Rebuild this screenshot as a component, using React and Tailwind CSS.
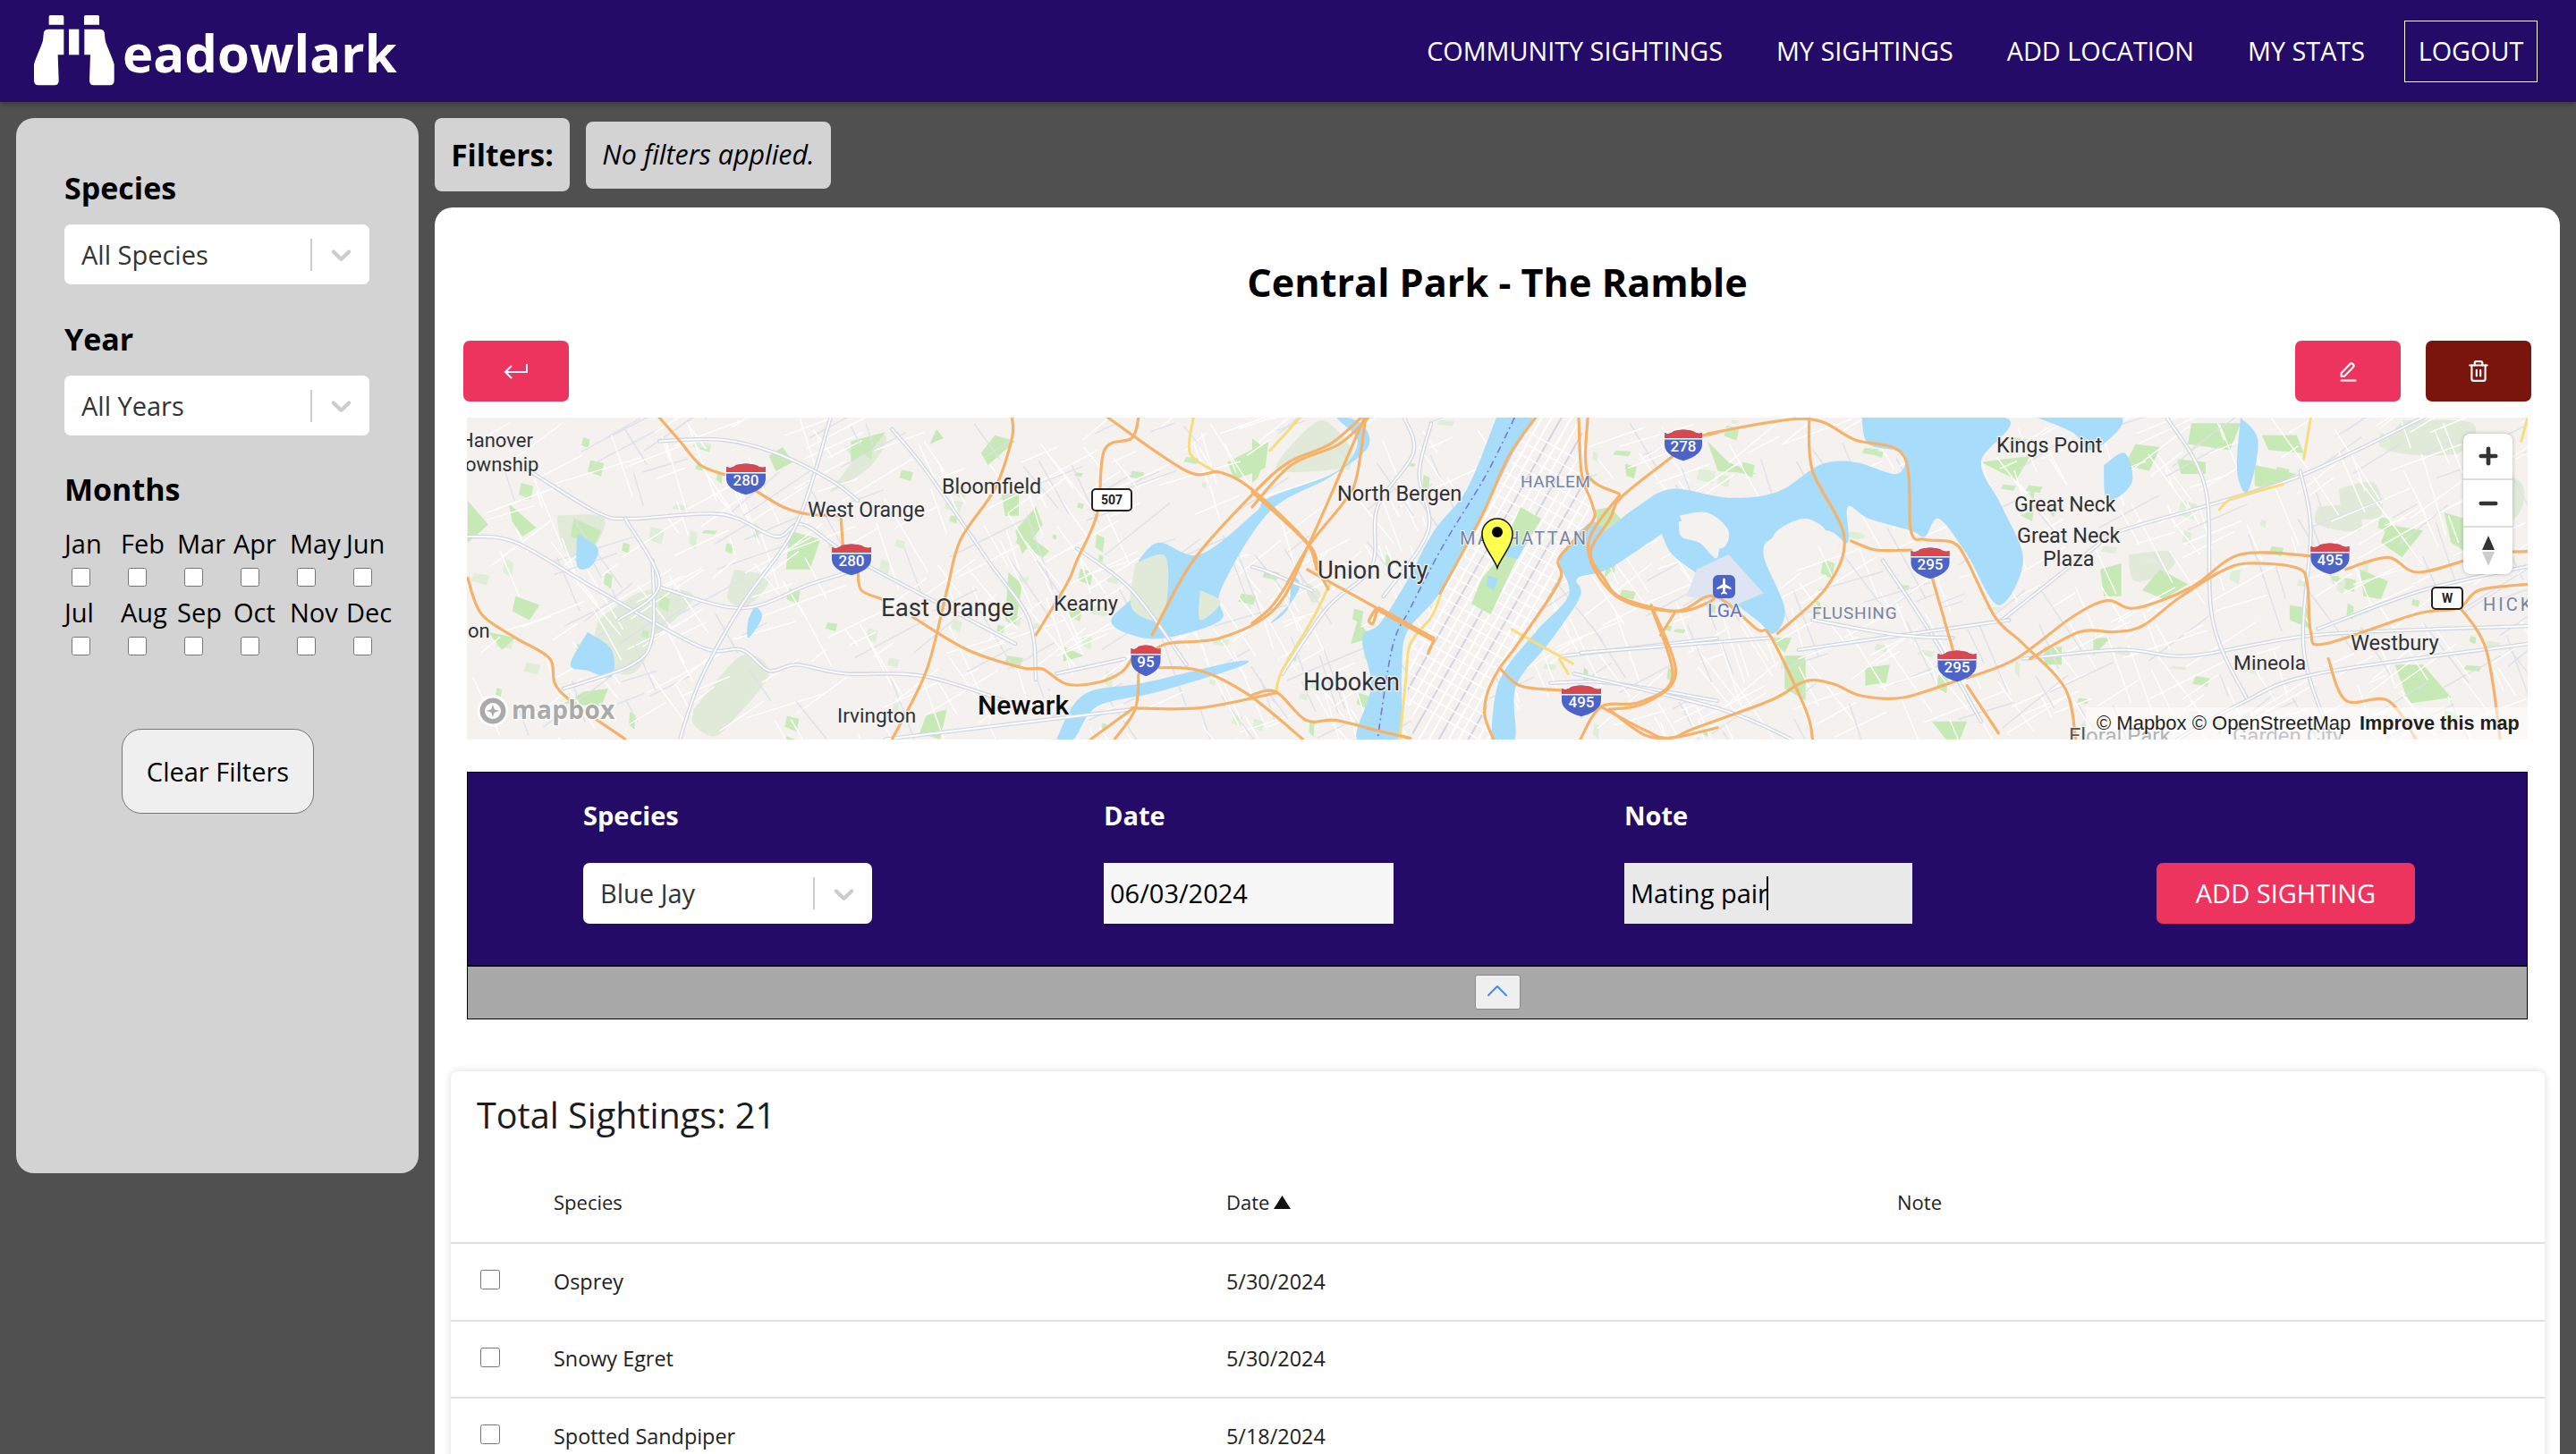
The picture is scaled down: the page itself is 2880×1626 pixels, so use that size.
import { ChevronUp, Minus, Plus, Trash2 } from "lucide-react";

const NAV_LINKS = ["COMMUNITY SIGHTINGS", "MY SIGHTINGS", "ADD LOCATION", "MY STATS"];
const MONTHS = ["Jan", "Feb", "Mar", "Apr", "May", "Jun", "Jul", "Aug", "Sep", "Oct", "Nov", "Dec"];
const SIGHTINGS = [
    { species: "Osprey", date: "5/30/2024" },
    { species: "Snowy Egret", date: "5/30/2024" },
    { species: "Spotted Sandpiper", date: "5/18/2024" },
];

// map traces were read off three crops, so each has its own conversion to map pixels
const z3 = (pts) => pts.map(([x, y]) => [x / 1.3067 - 22, y / 3 - 107]);
const z4 = (pts) => pts.map(([x, y]) => [1128 + x / 1.2748, y / 3 - 107]);
const z9 = (pts) => pts.map(([x, y]) => [878 + x / 3, y / 3]);

const poly = (pts) => pts.map(([x, y]) => `${x.toFixed(1)},${y.toFixed(1)}`).join(" ");

const smooth = (pts) => {
    let d = `M${pts[0][0].toFixed(1)} ${pts[0][1].toFixed(1)}`;
    for (let i = 0; i < pts.length - 1; i++) {
        const p0 = pts[i - 1] || pts[i];
        const p1 = pts[i];
        const p2 = pts[i + 1];
        const p3 = pts[i + 2] || p2;
        const c1x = p1[0] + (p2[0] - p0[0]) / 6;
        const c1y = p1[1] + (p2[1] - p0[1]) / 6;
        const c2x = p2[0] - (p3[0] - p1[0]) / 6;
        const c2y = p2[1] - (p3[1] - p1[1]) / 6;
        d += `C${c1x.toFixed(1)} ${c1y.toFixed(1)} ${c2x.toFixed(1)} ${c2y.toFixed(1)} ${p2[0].toFixed(1)} ${p2[1].toFixed(1)}`;
    }
    return d;
};

const WATER = [
    // hudson
    [[1151, 0], [1191, 0], [1168, 43], [1138, 103], [1108, 157], [1085, 200], [1051, 240], [1045, 283], [1041, 360], [995, 360], [1011, 300], [1001, 247], [1021, 230], [1051, 183], [1081, 127], [1118, 80]],
    // east river
    z9([[800, 1080], [830, 880], [950, 720], [1060, 600], [1040, 510], [1030, 470], [1140, 350], [1230, 430], [1290, 360], [1400, 260], [1560, 270], [1560, 330], [1440, 350], [1330, 420], [1190, 510], [1090, 540], [1100, 600], [1000, 750], [885, 900], [880, 1080]]),
    // the sound
    z4([[550, 321], [755, 321], [720, 470], [750, 620], [780, 800], [745, 950], [700, 780], [660, 660], [640, 720], [620, 700], [560, 660], [530, 620], [530, 740], [500, 700], [430, 720], [410, 780], [440, 960], [425, 1045], [400, 1000], [330, 870], [280, 780], [260, 700], [230, 720], [170, 830], [120, 830], [165, 740], [230, 620], [280, 560], [360, 590], [430, 570], [490, 480], [540, 470], [600, 510], [610, 440], [560, 410]]),
    z4([[800, 321], [920, 321], [880, 430], [850, 370]]),
    z4([[1090, 321], [1115, 400], [1100, 570], [1085, 500]]),
    z4([[895, 480], [925, 440], [935, 540], [900, 600]]),
    // hackensack and newark bay
    z3([[1010, 800], [1040, 740], [1100, 780], [1180, 640], [1200, 590], [1300, 500], [1330, 400], [1300, 321], [1335, 340], [1345, 420], [1290, 520], [1200, 640], [1130, 900], [1130, 1000], [1050, 1060], [1000, 1050], [970, 1000], [1010, 900]]),
    z3([[890, 1400], [930, 1250], [1020, 1210], [1150, 1140], [1160, 1155], [1040, 1240], [950, 1290], [915, 1400]]),
    z3([[190, 710], [220, 760], [210, 820], [190, 820]]),
    z3([[205, 1040], [240, 1100], [240, 1190], [205, 1170], [180, 1150]]),
    z3([[450, 950], [460, 990], [440, 1060], [440, 1000]]),
    z9([[130, 520], [160, 560], [130, 620], [60, 690], [120, 640]]),
];

// islands that sit on top of the water shapes
const ISLANDS = [
    { pts: z4([[290, 650], [330, 640], [360, 700], [350, 760], [310, 720]]), fill: "#f4f1ef" },
    { pts: z4([[415, 770], [430, 700], [470, 660], [500, 710], [470, 790], [430, 790]]), fill: "#f4f1ef" },
    { pts: z9([[1430, 350], [1510, 320], [1560, 350], [1560, 470], [1500, 420], [1440, 400]]), fill: "#f4f1ef" },
    { pts: z3([[1005, 810], [1050, 790], [1045, 990], [1000, 960]]), fill: "#e1ead9" },
    { pts: z3([[1100, 900], [1130, 940], [1100, 1000]]), fill: "#e1ead9" },
];

const GREEN = [
    z9([[900, 300], [970, 340], [880, 490], [800, 660], [735, 625], [770, 540], [820, 480], [860, 390]]),
    z9([[0, 70], [50, 110], [20, 200], [0, 220]]),
    z9([[1250, 155], [1290, 165], [1280, 205], [1255, 195]]),
    z9([[1150, 310], [1200, 300], [1255, 360], [1230, 390], [1160, 380]]),
    z9([[1190, 490], [1225, 490], [1180, 540]]),
    z3([[490, 420], [505, 470], [480, 500], [470, 450]]),
    z3([[590, 400], [640, 370], [620, 430], [590, 470]]),
    z3([[500, 700], [545, 730], [530, 830], [495, 830]]),
    z3([[185, 660], [225, 700], [215, 750], [180, 720]]),
    z3([[90, 610], [130, 690], [110, 720], [95, 670]]),
    z3([[100, 920], [135, 950], [120, 1000], [95, 970]]),
    z3([[30, 600], [60, 680], [30, 740]]),
    z3([[200, 1240], [235, 1230], [225, 1290], [170, 1280]]),
    z3([[800, 380], [830, 400], [790, 480], [780, 440]]),
    z3([[810, 580], [835, 570], [835, 650], [815, 650]]),
    z3([[860, 620], [870, 680], [840, 780], [830, 700]]),
    z3([[715, 360], [725, 390], [705, 410]]),
    z3([[840, 700], [880, 770], [870, 790], [830, 740]]),
    z3([[820, 840], [840, 880], [830, 1020], [815, 1000]]),
    z3([[900, 1090], [930, 1120], [900, 1140]]),
    z3([[1200, 400], [1195, 490], [1150, 530], [1140, 470]]),
    z3([[60, 1040], [100, 1060], [80, 1100]]),
    z3([[1330, 1000], [1350, 1060], [1320, 1080]]),
    z3([[700, 1320], [730, 1300], [720, 1400], [690, 1380]]),
    z4([[1020, 340], [1090, 340], [1075, 430], [1015, 410]]),
    z4([[720, 470], [790, 450], [770, 530]]),
    z4([[1000, 460], [1040, 470], [1040, 510], [1005, 510]]),
    z4([[940, 410], [975, 420], [960, 500], [925, 480]]),
    z4([[890, 830], [920, 810], [920, 920], [895, 920]]),
    z4([[975, 830], [1015, 880], [980, 930], [950, 900]]),
    z4([[1110, 480], [1170, 510], [1130, 560], [1110, 550]]),
    z4([[1120, 380], [1170, 380], [1180, 440], [1130, 430]]),
    z4([[1300, 680], [1350, 700], [1320, 790], [1290, 740]]),
    z4([[1260, 830], [1300, 870], [1290, 930], [1265, 920]]),
    z4([[1310, 1150], [1350, 1150], [1390, 1260], [1330, 1280]]),
    z4([[810, 1090], [835, 1090], [835, 1150], [810, 1150]]),
    z4([[1380, 640], [1440, 680], [1430, 800], [1390, 740]]),
    z4([[880, 1060], [905, 1060], [880, 1120]]),
    z4([[440, 1120], [470, 1120], [470, 1270], [440, 1230]]),
    z4([[555, 1160], [590, 1150], [585, 1210], [555, 1220]]),
    z4([[420, 1060], [450, 1060], [440, 1110]]),
    z4([[650, 1340], [700, 1340], [690, 1400], [670, 1400]]),
    z4([[330, 400], [360, 470], [400, 510], [345, 500]]),
    z4([[1160, 950], [1185, 960], [1190, 1030], [1160, 1000]]),
];

const PALE_GREEN = [
    z3([[580, 420], [640, 380], [620, 480], [560, 570], [590, 470]]),
    z3([[220, 1000], [290, 900], [360, 920], [310, 1050], [270, 1180], [215, 1130]]),
    z3([[360, 1300], [430, 1120], [470, 1180], [420, 1330], [390, 1390], [360, 1350]]),
    z3([[420, 830], [470, 860], [440, 950], [410, 930]]),
    z3([[160, 650], [230, 660], [200, 800], [170, 760]]),
    z9([[160, 60], [240, 10], [330, 100], [320, 160], [210, 180], [80, 170]]),
    z9([[180, 550], [230, 590], [200, 620]]),
    z4([[1230, 560], [1280, 540], [1290, 650], [1240, 650]]),
    z4([[930, 780], [990, 770], [990, 830], [940, 870]]),
    z4([[1200, 620], [1250, 620], [1260, 700], [1200, 680]]),
    z4([[1320, 330], [1420, 340], [1400, 440], [1300, 430]]),
    z4([[1420, 500], [1490, 540], [1480, 660], [1420, 620]]),
];

const GREY_ROADS = [
    z3([[120, 500], [220, 640], [270, 660], [400, 645], [480, 720], [520, 680], [600, 800], [830, 1080]]),
    z3([[30, 720], [100, 740], [220, 900], [370, 1090], [430, 1100], [470, 1170], [510, 1150], [580, 1180], [700, 1190], [850, 1300]]),
    z3([[310, 890], [430, 960], [530, 880], [600, 830]]),
    z3([[170, 1230], [270, 1150], [300, 1050], [300, 800]]),
    z3([[260, 660], [310, 880], [250, 1000]]),
    z3([[650, 360], [700, 500], [790, 800], [850, 1000], [860, 1200]]),
    z3([[920, 760], [1000, 900], [1080, 1150]]),
    z3([[560, 321], [510, 680], [430, 950], [370, 1200], [340, 1400]]),
    z3([[640, 1400], [1000, 1300]]),
    z3([[890, 1180], [990, 1130]]),
    z3([[310, 400], [400, 395], [480, 440], [560, 530], [600, 600]]),
    z9([[0, 500], [60, 520], [200, 580]]),
    z9([[510, 0], [540, 120], [420, 300], [400, 500], [250, 640], [100, 860]]),
    z9([[600, 20], [560, 190], [590, 380], [440, 600]]),
    z9([[1000, 890], [1200, 890], [1560, 950]]),
    z9([[1040, 800], [1300, 770], [1560, 740]]),
    z4([[1499, 1020], [1200, 1050], [1020, 1120], [920, 1100], [780, 1130]]),
    z4([[1499, 820], [1350, 900], [1200, 1030]]),
    z4([[1350, 321], [1160, 530], [920, 700], [880, 760], [750, 1000]]),
    z4([[985, 321], [1040, 560], [1050, 1000], [1100, 1270]]),
    z4([[1175, 500], [1190, 700], [1180, 1100], [1220, 1400]]),
    z4([[150, 1110], [420, 1060]]),
    z4([[140, 1180], [350, 1300], [450, 1400]]),
    z4([[580, 800], [650, 1050], [720, 1340]]),
    z4([[1499, 1080], [1200, 1180], [1090, 1280], [1000, 1400]]),
    z4([[460, 1100], [610, 1050], [760, 1000]]),
    z4([[480, 1000], [600, 1050], [680, 1060]]),
];

const ORANGE_ROADS = [
    z3([[310, 321], [340, 400], [370, 480], [405, 512]]),
    z3([[450, 565], [490, 620], [527, 645], [575, 650]]),
    z3([[575, 650], [578, 750]]),
    z3([[600, 840], [605, 900], [635, 930]]),
    z3([[680, 990], [760, 1100], [840, 1160], [870, 1165], [905, 1215], [950, 1210], [985, 1175], [1000, 1130]]),
    z3([[30, 860], [50, 980], [100, 1060], [150, 1130], [165, 1240], [260, 1400]]),
    z3([[825, 321], [825, 390], [800, 560], [750, 730], [730, 900], [700, 1170], [650, 1400]]),
    z3([[1010, 321], [1000, 390], [960, 430], [950, 640], [920, 800], [905, 880], [860, 1050]]),
    z3([[965, 321], [1080, 500], [1130, 505], [1180, 570], [1260, 750], [1270, 830]]),
    z3([[1340, 321], [1310, 480], [1260, 740], [1210, 960], [1130, 1060], [1050, 1080], [1020, 1130]]),
    z3([[1335, 321], [1290, 410], [1230, 470], [1180, 570], [1090, 800], [1030, 1050]]),
    z3([[1010, 1180], [1005, 1300], [975, 1400]]),
    z3([[1000, 1300], [940, 1400]]),
    z3([[1040, 1160], [1100, 1170], [1170, 1250], [1250, 1400]]),
    z3([[1000, 1295], [1100, 1295], [1210, 1245]]),
    z9([[0, 690], [60, 640], [110, 570], [190, 430], [310, 280], [350, 200], [380, 0]]),
    z9([[0, 300], [130, 160], [290, 90], [390, 0]]),
    z9([[0, 250], [100, 340], [190, 430], [215, 500], [255, 575]]),
    z9([[185, 510], [420, 640]]),
    z9([[610, 745], [590, 790]]),
    z9([[415, 640], [392, 680], [405, 690], [418, 650]]),
    z9([[0, 930], [80, 920], [180, 1015], [280, 1015], [420, 1050], [530, 1075]]),
    z9([[950, 0], [860, 130], [770, 330], [630, 590]]),
    z9([[1095, 0], [1105, 190], [1140, 290], [1140, 350], [1030, 470], [1030, 550], [890, 760], [830, 840], [790, 920], [780, 1000], [810, 1080]]),
    z9([[1125, 0], [1125, 190], [1230, 255]]),
    z9([[1410, 130], [1240, 265], [1200, 340], [1135, 450], [1180, 540], [1240, 605], [1420, 650], [1530, 620], [1560, 590]]),
    z9([[1340, 640], [1410, 870], [1300, 955], [1170, 970], [1100, 1080]]),
    z9([[1420, 650], [1370, 730]]),
    z9([[830, 840], [900, 900], [1040, 915]]),
    z9([[1170, 970], [1320, 1050], [1400, 1075], [1560, 1040]]),
    z9([[1510, 60], [1560, 50]]),
    z4([[330, 375], [470, 325], [540, 395], [610, 450], [620, 700], [640, 730], [680, 740], [700, 800], [740, 990], [780, 1080], [840, 1230], [855, 1400]]),
    z4([[475, 325], [480, 500], [525, 720], [500, 890], [430, 1045]]),
    z4([[535, 735], [570, 765], [620, 765]]),
    z4([[650, 855], [680, 1100]]),
    z4([[690, 1200], [610, 1260], [550, 1255], [510, 1215], [470, 1205], [420, 1270], [310, 1365], [280, 1395], [240, 1385], [190, 1300]]),
    z4([[700, 1195], [770, 1130], [850, 990], [900, 935], [940, 960], [1020, 890], [1090, 780], [1190, 785]]),
    z4([[700, 1220], [745, 1380]]),
    z4([[790, 1130], [860, 1040], [910, 1040], [950, 1020], [1000, 930], [1060, 840], [1100, 810], [1170, 825], [1185, 880], [1190, 1040], [1210, 1080], [1340, 980], [1400, 960], [1430, 900], [1499, 880]]),
    z4([[1240, 830], [1300, 790], [1345, 840], [1440, 780], [1499, 770]]),
    z4([[1400, 950], [1440, 1100], [1460, 1400]]),
    z4([[1215, 1130], [1240, 1270], [1300, 1270], [1340, 1400]]),
    z4([[250, 950], [285, 1180], [240, 1280], [190, 1300]]),
    z4([[205, 580], [160, 750], [200, 920], [285, 970], [340, 920], [400, 1030], [420, 1055], [470, 1300], [480, 1400]]),
];

const YELLOW_ROADS = [
    z9([[630, 600], [600, 670], [530, 760], [515, 880], [495, 1080]]),
    z9([[160, 0], [60, 110]]),
    z9([[260, 560], [200, 680], [100, 850], [80, 920]]),
    z9([[870, 710], [1075, 825]]),
    z9([[1030, 810], [1060, 860]]),
    z3([[1090, 321], [1085, 440], [1120, 500]]),
    z4([[1060, 630], [1080, 590], [1150, 545]]),
    z4([[1190, 321], [1180, 460]]),
    z4([[1499, 321], [1490, 400]]),
];

const LABELS = [
    ["Hanover", -8, 33, 22],
    ["Township", -14, 60, 22],
    ["on", 1, 246, 22],
    ["West Orange", 381, 111, 23],
    ["Bloomfield", 531, 85, 23.3],
    ["East Orange", 463, 222, 27.6],
    ["Kearny", 656, 216, 23.6],
    ["Irvington", 414, 341, 22.6],
    ["Union City", 951, 180, 27.4],
    ["Hoboken", 935, 305, 27],
    ["North Bergen", 973, 93, 23.6],
    ["Kings Point", 1710, 39, 23.4],
    ["Great Neck", 1730, 105, 23],
    ["Great Neck", 1733, 140, 23.4],
    ["Plaza", 1762, 166, 23.4],
    ["Westbury", 2106, 260, 23.6],
    ["Mineola", 1975, 282, 22.8],
];

const DISTRICTS = [
    ["HARLEM", 1178, 78, 19, 0.5, "#7484a4"],
    ["MANHATTAN", 1110, 142, 20, 2.4, "#7484a4"],
    ["LGA", 1387, 223, 21, 0, "#5b73c9"],
    ["FLUSHING", 1504, 225, 19, 0.8, "#7484a4"],
    ["HICK", 2254, 216, 20, 3, "#7484a4"],
    ["Floral Park", 1791, 364, 24, 0, "#55585e"],
    ["Garden City", 1974, 364, 24, 0, "#7a7d83"],
];

const SHIELDS = [
    ["280", 312, 67, 44],
    ["280", 430, 157, 44],
    ["95", 759, 270, 33],
    ["278", 1360, 29, 42],
    ["495", 1246, 315, 44],
    ["295", 1636, 161, 43],
    ["295", 1666, 276, 43],
    ["495", 2083, 156, 43],
];

// thin side streets and small parks, same every render
let seed = 1234;
const rand = () => {
    seed = (seed * 16807) % 2147483647;
    return seed / 2147483647;
};

const STREETS = Array.from({ length: 900 }, () => {
    const x = rand() * 2304;
    const y = rand() * 360;
    const base = rand() > 0.5 ? 62 : -28;
    const angle = (base + rand() * 24 - 12) * (Math.PI / 180);
    const len = 20 + rand() * 80;
    return { x, y, x2: x + Math.cos(angle) * len, y2: y + Math.sin(angle) * len, grey: rand() > 0.72 };
});

const PARKS = Array.from({ length: 190 }, () => {
    const x = rand() * 2304;
    const y = rand() * 360;
    const w = 4 + rand() * 14;
    const h = 4 + rand() * 18;
    const pale = rand() > 0.55;
    return { pts: [[x, y], [x + w, y + h * 0.2], [x + w * 0.8, y + h], [x - w * 0.2, y + h * 0.7]], pale };
});

const MANHATTAN = z9([[950, 0], [1100, 0], [1140, 300], [1030, 470], [1030, 550], [820, 850], [780, 1000], [800, 1080], [540, 1080], [510, 800], [630, 590], [770, 330]]);
const AVENUES = Array.from({ length: 24 }, (_, i) => i);
const CROSS_STREETS = Array.from({ length: 26 }, (_, i) => i);

const Shield = ({ label, x, y, w }) => {
    const h = 32;
    const l = x - w / 2;
    const t = y - h / 2;
    return (
        <g>
            <path d={`M${l} ${t + 4}q${w / 8} 3 ${w / 4} -2q${w / 4} -3 ${w / 2} 0q${w / 8} 4 ${w / 4} 2v${h * 0.42}q0 ${h * 0.36} -${w / 2} ${h * 0.56}q-${w / 2} -${h * 0.2} -${w / 2} -${h * 0.56}z`} fill="#4c64c8" />
            <path d={`M${l} ${t + 4}q${w / 8} 3 ${w / 4} -2q${w / 4} -3 ${w / 2} 0q${w / 8} 4 ${w / 4} 2v6h-${w}z`} fill="#d9484e" />
            <rect x={l} y={t + 10} width={w} height="1.5" fill="#ffffff" />
            <text x={x} y={y + 9} textAnchor="middle" fontSize="17" fontWeight="500" fill="#ffffff" fontFamily="Roboto, sans-serif">{label}</text>
        </g>
    );
};

const RouteBadge = ({ label, x, y, w }) => (
    <g>
        <rect x={x - w / 2} y={y - 12} width={w} height="24" rx="4" fill="#ffffff" stroke="#222222" strokeWidth="2" />
        <text x={x} y={y + 5} textAnchor="middle" fontSize="14" fontWeight="700" fill="#222222" fontFamily="Roboto, sans-serif">{label}</text>
    </g>
);

const MapLayer = () => (
    <svg viewBox="0 0 2304 360" className="block w-full h-full">
        <defs>
            <clipPath id="manhattan">
                <polygon points={poly(MANHATTAN)} />
            </clipPath>
        </defs>
        <rect width="2304" height="360" fill="#f4f1ef" />
        {PALE_GREEN.map((g, i) => <path key={i} d={smooth([...g, g[0]]) + "Z"} fill="#e1ead9" />)}
        {PARKS.map((p, i) => <polygon key={i} points={poly(p.pts)} fill={p.pale ? "#dfeed6" : "#c9eab9"} />)}
        {GREEN.map((g, i) => <polygon key={i} points={poly(g)} fill="#c6e9b5" />)}
        {STREETS.map((s, i) => <line key={i} x1={s.x} y1={s.y} x2={s.x2} y2={s.y2} stroke={s.grey ? "#dde1e8" : "#ffffff"} strokeWidth="1.4" />)}
        {WATER.map((g, i) => <path key={i} d={smooth([...g, g[0]]) + "Z"} fill="#a8dcfb" />)}
        {ISLANDS.map((g, i) => <path key={i} d={smooth([...g.pts, g.pts[0]]) + "Z"} fill={g.fill} />)}
        <polygon points={poly(z4([[315, 830], [360, 780], [410, 910], [370, 950], [300, 920]]))} fill="#dfe4f3" />
        <g clipPath="url(#manhattan)">
            <rect width="2304" height="360" fill="#f4f1ef" />
            {AVENUES.map((i) => (
                <line key={i} x1={1400 - i * 11} y1="-20" x2={1163 - i * 11} y2="400" stroke={i % 3 === 0 ? "#cfd5e2" : "#ffffff"} strokeWidth="2" />
            ))}
            {CROSS_STREETS.map((i) => (
                <line key={i} x1="1000" y1={i * 15 - 90} x2="1300" y2={i * 15 + 80} stroke="#ffffff" strokeWidth="1.5" />
            ))}
            <polygon points={poly(GREEN[0])} fill="#c6e9b5" />
            <polygon points={poly(z9([[860, 435], [920, 420], [890, 475], [850, 465]]))} fill="#a8dcfb" />
            <polygon points={poly(z9([[790, 530], [825, 540], [810, 580], [785, 565]]))} fill="#a8dcfb" />
        </g>
        <path d={smooth(z9([[880, 0], [780, 200], [640, 430], [530, 640], [470, 770], [420, 1080]]))} fill="none" stroke="#7e74d0" strokeWidth="1.6" strokeDasharray="8 4 2 4" />
        {GREY_ROADS.map((r, i) => (
            <g key={i} fill="none" strokeLinecap="round">
                <path d={smooth(r)} stroke="#d2d8e3" strokeWidth="4.5" />
                <path d={smooth(r)} stroke="#ffffff" strokeWidth="1.8" />
            </g>
        ))}
        {YELLOW_ROADS.map((r, i) => <path key={i} d={smooth(r)} fill="none" stroke="#f7dd7c" strokeWidth="3" strokeLinecap="round" />)}
        {ORANGE_ROADS.map((r, i) => <path key={i} d={smooth(r)} fill="none" stroke="#f5b26a" strokeWidth="3.2" strokeLinecap="round" />)}
        <path d={smooth(z9([[420, 640], [610, 745]]))} fill="none" stroke="#f5b26a" strokeWidth="6" />

        {LABELS.map(([text, x, y, size], i) => (
            <text key={i} x={x} y={y} fontSize={size} fill="#2f3136" stroke="#f4f1ef" strokeWidth="2.5" paintOrder="stroke" fontFamily="Roboto, sans-serif">{text}</text>
        ))}
        <text x="571" y="332" fontSize="30" fontWeight="500" fill="#0c0c0c" stroke="#f4f1ef" strokeWidth="2.5" paintOrder="stroke" fontFamily="Roboto, sans-serif">Newark</text>
        {DISTRICTS.map(([text, x, y, size, spacing, color], i) => (
            <text key={i} x={x} y={y} fontSize={size} letterSpacing={spacing} fill={color} stroke="#f4f1ef" strokeWidth="2" paintOrder="stroke" fontFamily="Roboto, sans-serif">{text}</text>
        ))}
        {SHIELDS.map(([label, x, y, w], i) => <Shield key={i} label={label} x={x} y={y} w={w} />)}
        <RouteBadge label="507" x={721} y={92} w={44} />
        <RouteBadge label="W" x={2214} y={202} w={34} />

        {/* LGA plane */}
        <rect x="1393" y="176" width="25" height="26" rx="6" fill="#4c64c8" />
        <path d="M1405.5 179.5c1 0 1.4 1 1.4 2.6v4.2l6.6 4v2l-6.6-2v4.4l2 1.6v1.5l-3.4-1-3.4 1v-1.5l2-1.6v-4.4l-6.6 2v-2l6.6-4v-4.2c0-1.6.4-2.6 1.4-2.6z" fill="#ffffff" />

        {/* pin */}
        <path d="M1152 168c-3-10-17-24-17-38a17 17 0 0 1 34 0c0 14-14 28-17 38z" fill="#ffff4d" stroke="#111111" strokeWidth="1.5" />
        <circle cx="1152" cy="128" r="6" fill="#000000" />

        {/* mapbox logo */}
        <g opacity="0.9">
            <circle cx="29" cy="328" r="16" fill="#a3a3a3" stroke="#ffffff" strokeWidth="3" />
            <circle cx="29" cy="328" r="9" fill="#ffffff" />
            <path d="M29 321l1.8 5.2 5.2 1.8-5.2 1.8-1.8 5.2-1.8-5.2-5.2-1.8 5.2-1.8z" fill="#a3a3a3" />
            <text x="50" y="337" fontSize="28" fontWeight="700" fill="#a3a3a3" stroke="#ffffff" strokeWidth="3" paintOrder="stroke" fontFamily="'Open Sans', sans-serif" letterSpacing="0.4">mapbox</text>
        </g>

        {/* attribution */}
        <rect x="1810" y="324" width="494" height="36" fill="#ffffff" opacity="0.55" />
        <text x="1822" y="349" fontSize="22" fill="#1f1f1f" fontFamily="'Liberation Sans', sans-serif">© Mapbox © OpenStreetMap</text>
        <text x="2116" y="349" fontSize="21.6" fontWeight="700" fill="#1f1f1f" fontFamily="'Liberation Sans', sans-serif">Improve this map</text>
    </svg>
);

const MapControls = () => (
    <div className="absolute top-[18px] right-[17px] w-[55px] h-[157px] flex flex-col bg-white rounded-lg shadow-[0_0_4px_rgba(0,0,0,0.25)]">
        <div className="h-[52px] flex items-center justify-center border-b-2 border-[#dddddd]">
            <Plus size={28} strokeWidth={4} color="#333333" />
        </div>
        <div className="h-[53px] flex items-center justify-center border-b-2 border-[#dddddd]">
            <Minus size={28} strokeWidth={4} color="#333333" />
        </div>
        <div className="flex-1 flex items-center justify-center">
            <svg width="18" height="34" viewBox="0 0 18 34">
                <path d="M9 0l7 16H2z" fill="#333333" />
                <path d="M9 34l7-16H2z" fill="#cccccc" />
            </svg>
        </div>
    </div>
);

const SelectBox = ({ value, className }) => (
    <div className={`h-[67px] flex items-center bg-white rounded-[7px] ${className}`}>
        <span className="flex-1 pl-[19px] text-[29px] text-[#333333] whitespace-nowrap">{value}</span>
        <span className="w-[2px] h-[36px] bg-[#cccccc]" />
        <span className="w-[64px] flex items-center justify-center">
            <svg width="37" height="37" viewBox="0 0 20 20" fill="#cccccc">
                <path d="M4.516 7.548c0.436-0.446 1.043-0.481 1.576 0l3.908 3.747 3.908-3.747c0.533-0.481 1.141-0.446 1.574 0 0.436 0.445 0.408 1.197 0 1.615-0.406 0.418-4.695 4.502-4.695 4.502-0.217 0.223-0.502 0.335-0.787 0.335s-0.57-0.112-0.789-0.335c0 0-4.287-4.084-4.695-4.502s-0.436-1.17 0-1.615z" />
            </svg>
        </span>
    </div>
);

const Sidebar = () => (
    <aside className="w-[450px] h-[1180px] shrink-0 bg-[#d3d3d3] rounded-[20px] pt-[56px] pl-[54px]">
        <h2 className="text-[34px] leading-[44px] font-bold text-black">Species</h2>
        <SelectBox value="All Species" className="w-[341px] mt-[19px]" />
        <h2 className="text-[34px] leading-[44px] font-bold text-black mt-[39px]">Year</h2>
        <SelectBox value="All Years" className="w-[341px] mt-[19px]" />
        <h2 className="text-[34px] leading-[44px] font-bold text-black mt-[38px]">Months</h2>
        <div className="grid grid-cols-[repeat(6,63px)] mt-[19px] gap-y-[9px]">
            {MONTHS.map((m) => (
                <label key={m} className="flex flex-col text-[29px] leading-[40px] text-black whitespace-nowrap">
                    {m}
                    <input type="checkbox" className="w-[21px] h-[21px] ml-[8px] mt-[7px]" />
                </label>
            ))}
        </div>
        <button className="block w-[215px] h-[95px] ml-[64px] mt-[82px] bg-[#efefef] border border-[#767676] rounded-[22px] text-[29px] text-black">
            Clear Filters
        </button>
    </aside>
);

const AddSightingForm = () => (
    <div className="mx-[36px] mt-[36px] border border-black">
        <div className="h-[217px] bg-[#240b68] border-b-2 border-black grid grid-cols-[582px_582px_582px_1fr] pl-[129px] pt-[28px]">
            <div>
                <div className="text-[29px] leading-[40px] font-bold text-white">Species</div>
                <SelectBox value="Blue Jay" className="w-[323px] h-[68px] mt-[33px]" />
            </div>
            <div>
                <div className="text-[29px] leading-[40px] font-bold text-white">Date</div>
                <div className="w-[324px] h-[68px] mt-[33px] bg-[#f7f7f7] pl-[7px] flex items-center text-[29px] text-black">06/03/2024</div>
            </div>
            <div>
                <div className="text-[29px] leading-[40px] font-bold text-white">Note</div>
                <div className="w-[322px] h-[68px] mt-[33px] bg-[#e9e9e9] pl-[7px] flex items-center text-[29px] text-black">
                    Mating pair<span className="w-[2px] h-[38px] bg-black -ml-[2px]" />
                </div>
            </div>
            <div className="pt-[73px] pl-[13px]">
                <button className="w-[289px] h-[68px] bg-[#ec345e] rounded-[7px] text-[29px] text-white">ADD SIGHTING</button>
            </div>
        </div>
        <div className="h-[58px] bg-[#a8a8a8] flex justify-center pt-[9px]">
            <button className="w-[51px] h-[39px] bg-[#efefef] border border-[#8a8a8a] rounded-[3px] flex items-center justify-center overflow-hidden">
                <ChevronUp size={40} strokeWidth={1.2} color="#3b8ff0" className="shrink-0 -mt-[3px]" />
            </button>
        </div>
    </div>
);

const SightingsTable = () => (
    <div className="mt-[58px] ml-[18px] mr-[17px] bg-white rounded-lg shadow-[0_0_10px_rgba(0,0,0,0.15)]">
        <div className="h-[102px] pl-[29px] pt-[22px] text-[39.6px] leading-[54px] text-[#1c1c1c]">Total Sightings: 21</div>
        <div className="h-[91px] grid grid-cols-[115px_752px_750px_1fr] items-center text-[22px] text-[#222222] border-b-2 border-[#e0e0e0]">
            <span />
            <span>Species</span>
            <span className="flex items-center gap-[5px]">
                Date
                <svg width="19" height="15" viewBox="0 0 19 15" fill="#111111">
                    <path d="M9.5 0l9.5 15H0z" />
                </svg>
            </span>
            <span>Note</span>
        </div>
        {SIGHTINGS.map((s) => (
            <div key={s.species} className="h-[86.5px] grid grid-cols-[115px_752px_750px_1fr] items-center text-[23.4px] text-[#222222] border-b-2 border-[#e0e0e0]">
                <input type="checkbox" className="w-[22px] h-[22px] ml-[33px] -mt-[4px]" />
                <span>{s.species}</span>
                <span>{s.date}</span>
                <span />
            </div>
        ))}
    </div>
);

const App = () => {
    return (
        <div className="h-screen overflow-hidden bg-[#505050] [font-family:'Open_Sans',sans-serif]">
            <header className="h-[114px] bg-[#240b68] flex items-center justify-between pl-[38px] pr-[43px] shadow-[0_2px_6px_rgba(0,0,0,0.3)]">
                <div className="flex items-center gap-[9px]">
                    <svg width="90" height="80" viewBox="25 25 270 240" fill="#ffffff">
                        <path d="M80 25h40q5 0 5 5v27H75V30q0-5 5-5zM198 25h41q5 0 5 5v27h-51V30q0-5 5-5z" />
                        <path d="M72 72h53v86h-20l3 87q0 15-15 15H40q-15 0-15-15v-55c5-20 25-60 30-80l2-20q0-18 15-18z" />
                        <rect x="142" y="72" width="34" height="86" />
                        <path d="M247 72h-53v86h20l-3 87q0 15 15 15h53q15 0 15-15v-55c-5-20-25-60-30-80l-2-20q0-18-15-18z" />
                    </svg>
                    <span className="text-[58px] leading-none font-bold text-white mt-[3px]">eadowlark</span>
                </div>
                <nav className="flex items-center">
                    {NAV_LINKS.map((link) => (
                        <a key={link} className="text-[28.8px] text-white mr-[60px] whitespace-nowrap">{link}</a>
                    ))}
                    <a className="-ml-[16px] w-[149px] h-[69px] border-[1.5px] border-white flex items-center justify-center text-[28.8px] text-white">LOGOUT</a>
                </nav>
            </header>

            <div className="flex gap-[18px] px-[18px] pt-[18px]">
                <Sidebar />
                <main className="flex-1 min-w-0">
                    <div className="flex items-center gap-[18px] h-[82px]">
                        <div className="w-[151px] h-[82px] bg-[#d3d3d3] rounded-lg flex items-center justify-center text-[33.5px] font-bold text-black">Filters:</div>
                        <div className="w-[274px] h-[75px] bg-[#d3d3d3] rounded-lg flex items-center justify-center text-[30.4px] italic text-black">No filters applied.</div>
                    </div>
                    <div className="mt-[18px] bg-white rounded-t-[20px] h-[1400px]">
                        <h1 className="pt-[56px] text-[43.2px] leading-[56px] font-bold text-black text-center">Central Park - The Ramble</h1>
                        <div className="flex justify-between px-[32px] mt-[37px]">
                            <button className="w-[118px] h-[68px] bg-[#ec345e] rounded-[7px] flex items-center justify-center">
                                <svg width="28" height="17" viewBox="0 0 28 17" fill="none" stroke="#ffffff" strokeWidth="2">
                                    <path d="M26 0v9H2" />
                                    <path d="M9 2L2 9l7 7" />
                                </svg>
                            </button>
                            <div className="flex gap-[28px]">
                                <button className="w-[118px] h-[68px] bg-[#ec345e] rounded-[7px] flex items-center justify-center">
                                    <svg width="21" height="25" viewBox="0 0 24 26" fill="none" stroke="#ffffff" strokeWidth="2.4">
                                        <path d="M3 19v-4L14 3.5q2-2 4 0t0 4L7 19z" />
                                        <path d="M2 24.5h20" />
                                    </svg>
                                </button>
                                <button className="w-[118px] h-[68px] bg-[#7a150e] rounded-[7px] flex items-center justify-center">
                                    <Trash2 size={26} strokeWidth={2} color="#ffffff" />
                                </button>
                            </div>
                        </div>
                        <div className="relative mx-[36px] mt-[18px] h-[360px] overflow-hidden">
                            <MapLayer />
                            <MapControls />
                        </div>
                        <AddSightingForm />
                        <SightingsTable />
                    </div>
                </main>
            </div>
        </div>
    );
};

export default App;
